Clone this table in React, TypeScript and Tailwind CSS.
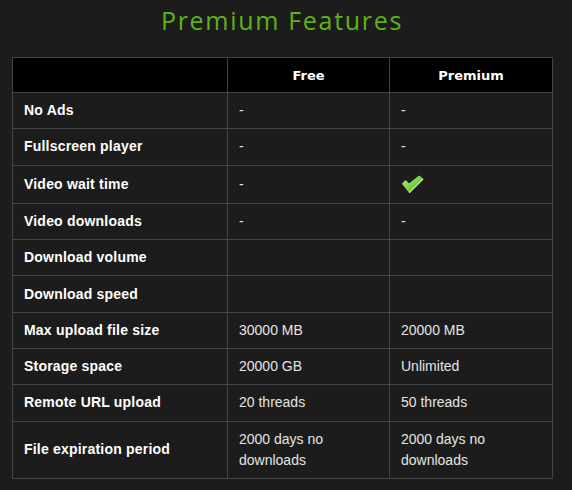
const rows: { label: string; free: string; premium: string | "check" }[] = [
  { label: "No Ads", free: "-", premium: "-" },
  { label: "Fullscreen player", free: "-", premium: "-" },
  { label: "Video wait time", free: "-", premium: "check" },
  { label: "Video downloads", free: "-", premium: "-" },
  { label: "Download volume", free: "", premium: "" },
  { label: "Download speed", free: "", premium: "" },
  { label: "Max upload file size", free: "30000 MB", premium: "20000 MB" },
  { label: "Storage space", free: "20000 GB", premium: "Unlimited" },
  { label: "Remote URL upload", free: "20 threads", premium: "50 threads" },
  {
    label: "File expiration period",
    free: "2000 days no downloads",
    premium: "2000 days no downloads",
  },
];

function CheckMark() {
  return (
    <svg width="24" height="24" viewBox="0 0 24 24" className="block -ml-[1px] -mt-[1px]">
      <defs>
        <linearGradient id="chk" x1="0" y1="0" x2="1" y2="1">
          <stop offset="0" stopColor="#b4ea7a" />
          <stop offset="0.6" stopColor="#6fce3c" />
          <stop offset="1" stopColor="#3fa82a" />
        </linearGradient>
      </defs>
      <polygon
        points="2,11.5 5.5,8 9,11.5 19,3.5 23,6.5 9,20.5"
        fill="#e8f8d8"
        transform="translate(0.6,0.8)"
      />
      <polygon
        points="2,11.5 5.5,8 9,11.5 19,3.5 23,6.5 9,20.5"
        fill="url(#chk)"
      />
    </svg>
  );
}

export default function App() {
  return (
    <main
      className="min-h-[490px] w-[572px] bg-[#1c1c1c] pt-[5px]"
      style={{ fontFamily: '"Liberation Sans", Arial, sans-serif' }}
    >
      <h1
        className="mb-[22px] ml-[12px] w-[540px] text-center text-[25px] leading-[30px] font-normal text-[#5cb414] tracking-[1.7px]"
        style={{ fontFamily: '"Open Sans", sans-serif' }}
      >
        Premium Features
      </h1>
      <table className="ml-[12px] w-[540px] table-fixed border-collapse border border-[#444]">
        <colgroup>
          <col className="w-[215px]" />
          <col className="w-[162px]" />
          <col className="w-[163px]" />
        </colgroup>
        <thead>
          <tr className="bg-black">
            <th className="border border-[#444] pt-[7px] pb-[6px]" />
            <th
              className="border border-[#444] pt-[7px] pb-[6px] text-center text-[13px] leading-[21px] font-bold text-white"
              style={{ fontFamily: '"DejaVu Sans", sans-serif' }}
            >
              Free
            </th>
            <th
              className="border border-[#444] pt-[7px] pb-[6px] text-center text-[13px] leading-[21px] font-bold text-white"
              style={{ fontFamily: '"DejaVu Sans", sans-serif' }}
            >
              Premium
            </th>
          </tr>
        </thead>
        <tbody>
          {rows.map((row) => (
            <tr key={row.label}>
              <td className="border border-[#444] px-[11px] py-[7.15px] text-[14px] leading-[21px] font-bold text-white tracking-[0.2px]">
                {row.label}
              </td>
              <td className="border border-[#444] px-[11px] py-[7.15px] text-[14px] leading-[21px] text-[#e4e4e4]">
                {row.free}
              </td>
              <td className="border border-[#444] px-[11px] py-[7.15px] text-[14px] leading-[21px] text-[#e4e4e4]">
                {row.premium === "check" ? <CheckMark /> : row.premium}
              </td>
            </tr>
          ))}
        </tbody>
      </table>
    </main>
  );
}
